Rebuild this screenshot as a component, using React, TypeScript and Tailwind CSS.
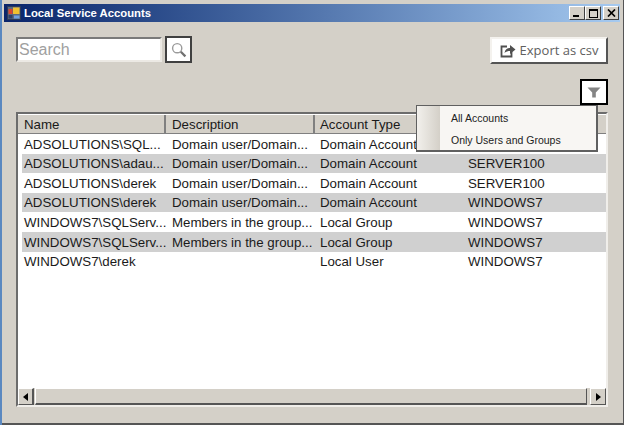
const rows = [
    { name: 'ADSOLUTIONS\\SQL...', desc: 'Domain user/Domain...', type: 'Domain Account', host: '' },
    { name: 'ADSOLUTIONS\\adau...', desc: 'Domain user/Domain...', type: 'Domain Account', host: 'SERVER100' },
    { name: 'ADSOLUTIONS\\derek', desc: 'Domain user/Domain...', type: 'Domain Account', host: 'SERVER100' },
    { name: 'ADSOLUTIONS\\derek', desc: 'Domain user/Domain...', type: 'Domain Account', host: 'WINDOWS7' },
    { name: 'WINDOWS7\\SQLServ...', desc: 'Members in the group...', type: 'Local Group', host: 'WINDOWS7' },
    { name: 'WINDOWS7\\SQLServ...', desc: 'Members in the group...', type: 'Local Group', host: 'WINDOWS7' },
    { name: 'WINDOWS7\\derek', desc: '', type: 'Local User', host: 'WINDOWS7' },
]

function CaptionButton({ children }: { children: React.ReactNode }) {
    return (
        <div className="w-[16px] h-[14px] bg-[#d4d0c8] border border-t-white border-l-white border-r-[#404040] border-b-[#404040] flex items-center justify-center">
            {children}
        </div>
    )
}

function AppIcon() {
    return (
        <svg width="14" height="14" viewBox="0 0 14 14" className="shrink-0">
            <rect x="0.5" y="0.5" width="13" height="13" fill="#5a6880" stroke="#2c3a58" />
            <rect x="1.5" y="3" width="4" height="5" fill="#d8452f" />
            <rect x="6" y="1.5" width="6.5" height="6.5" fill="#f0c030" />
            <rect x="1.5" y="9" width="4" height="3.5" fill="#2f3f68" />
            <rect x="7" y="9.5" width="5.5" height="3" fill="#6f9fe0" />
        </svg>
    )
}

export default function App() {
    return (
        <div className="w-[624px] h-[425px] overflow-hidden bg-[#d4d0c8] flex flex-col border-l-[2px] border-l-[#5a88c0] pl-[2px] pr-[4px] pt-[4px] font-['Liberation_Sans',sans-serif] relative">
            <div className="h-[18px] shrink-0 flex items-center justify-between pl-[3px] pr-[1px] bg-gradient-to-r from-[#0a246a] to-[#a6caf0]">
                <div className="flex items-center gap-[3px]">
                    <AppIcon />
                    <span className="text-[11.3px] font-bold text-white leading-none pt-[2px]">Local Service Accounts</span>
                </div>
                <div className="flex items-center">
                    <CaptionButton><div className="w-[6px] h-[2px] bg-black mt-[6px] mr-[2px]" /></CaptionButton>
                    <CaptionButton><div className="w-[9px] h-[9px] border border-black border-t-2" /></CaptionButton>
                    <div className="ml-[2px]">
                        <CaptionButton>
                            <svg width="9" height="8" viewBox="0 0 9 8">
                                <path d="M1 0.5 L8 7.5 M8 0.5 L1 7.5" stroke="#000000" strokeWidth="1.7" />
                            </svg>
                        </CaptionButton>
                    </div>
                </div>
            </div>

            <div className="flex-1 flex flex-col pl-[12px] pr-[12px] pb-[18px]">
                <div className="flex items-start justify-between pt-[14px]">
                    <div className="flex items-start gap-[3px]">
                        <div className="w-[146px] h-[25px] mt-[1px] bg-white border-2 border-t-[#7a7a7a] border-l-[#7a7a7a] border-r-[#ece9e4] border-b-[#ece9e4] flex items-center pl-[1px]">
                            <span className="text-[16px] leading-none text-[#a0a0a0]">Search</span>
                        </div>
                        <div className="w-[27px] h-[27px] bg-white border-2 border-[#404040] flex items-center justify-center">
                            <svg width="16" height="16" viewBox="0 0 16 16">
                                <circle cx="6.2" cy="6.2" r="4.6" fill="none" stroke="#9a9a9a" strokeWidth="1.4" />
                                <path d="M9.8 9.8 L14.4 14.4" stroke="#707070" strokeWidth="2.2" />
                            </svg>
                        </div>
                    </div>
                    <div className="w-[118px] h-[27px] mt-[1px] bg-white border-2 border-t-[#f4f2ee] border-l-[#f4f2ee] border-r-[#555555] border-b-[#555555] flex items-center justify-center gap-[4px]">
                        <svg width="16" height="15" viewBox="0 0 16 15">
                            <path d="M7 3.5H1.5v10h10V9" fill="none" stroke="#505050" strokeWidth="1.8" />
                            <path d="M4.5 10C5 6.5 7 5 10 5V2l5.5 4.5L10 11V8C8 8 6 8.5 4.5 10z" fill="#505050" />
                        </svg>
                        <span className="text-[13px] leading-none text-[#606060] font-['Open_Sans',sans-serif]">Export as csv</span>
                    </div>
                </div>

                <div className="flex justify-end mt-[15px]">
                    <div className="w-[28px] h-[26px] bg-white border-2 border-black flex items-center justify-center">
                        <svg width="14" height="11" viewBox="0 0 14 11">
                            <path d="M0.5 0.5h13L8.8 5.5V10.5H5.2V5.5z" fill="#858585" />
                        </svg>
                    </div>
                </div>

                <div className="mt-[7px] flex-1 flex flex-col bg-white border-2 border-t-[#6c6c6c] border-l-[#6c6c6c] border-r-[#f0eeea] border-b-[#f0eeea] text-[13.3px] leading-none text-[#1a1a1a]">
                    <div className="h-[20px] shrink-0 flex bg-[#d4d0c8] border-b border-b-[#808080] border-t border-t-white">
                        <div className="w-[148px] pl-[6px] pt-[1px] flex items-center border-r-2 border-r-[#808080]">Name</div>
                        <div className="w-[149px] pl-[6px] pt-[1px] flex items-center border-r-2 border-r-[#808080]">Description</div>
                        <div className="w-[148px] pl-[5px] pt-[1px] flex items-center">Account Type</div>
                        <div className="flex-1" />
                    </div>
                    <div className="flex-1 flex flex-col pl-[4px]">
                        {rows.map((row, i) => (
                            <div key={i} className={`h-[19.6px] shrink-0 flex items-center pt-[1px] ${i % 2 === 1 ? 'bg-[#d0d0d0]' : ''}`}>
                                <div className="w-[148px] pl-[2px]">{row.name}</div>
                                <div className="w-[148px] pl-[2px]">{row.desc}</div>
                                <div className="w-[148px] pl-[2px]">{row.type}</div>
                                <div className="pl-[2px]">{row.host}</div>
                            </div>
                        ))}
                    </div>
                    <div className="h-[17px] shrink-0 flex bg-[#d4d0c8]">
                        <div className="w-[16px] border border-t-white border-l-white border-r-2 border-r-[#555555] border-b-[#555555] flex items-center justify-center">
                            <div className="w-0 h-0 border-y-[4px] border-y-transparent border-r-[5px] border-r-black" />
                        </div>
                        <div className="flex-1 ml-[1px] border border-t-white border-l-white border-r-[#555555] border-b-2 border-b-[#555555]" />
                        <div className="w-[16px] ml-[3px] border border-t-white border-l-white border-r-[#555555] border-b-[#555555] flex items-center justify-center">
                            <div className="w-0 h-0 border-y-[4px] border-y-transparent border-l-[5px] border-l-black" />
                        </div>
                    </div>
                </div>
            </div>

            <div className="absolute left-[414px] top-[105px] w-[182px] h-[47px] flex bg-[#f8f6f3] border border-[#606060] border-r-2 border-b-2 text-[10.5px] leading-none text-[#222222]">
                <div className="w-[23px] bg-gradient-to-r from-[#f2f0ec] to-[#d4d0c8]" />
                <div className="flex flex-col pl-[11px] pt-[7px] gap-[11px]">
                    <span>All Accounts</span>
                    <span>Only Users and Groups</span>
                </div>
            </div>

            <div className="absolute left-0 right-0 bottom-0 h-[2px] bg-[#555555]" />
            <div className="absolute right-0 top-0 bottom-0 w-[1px] bg-[#555555]" />
        </div>
    )
}
